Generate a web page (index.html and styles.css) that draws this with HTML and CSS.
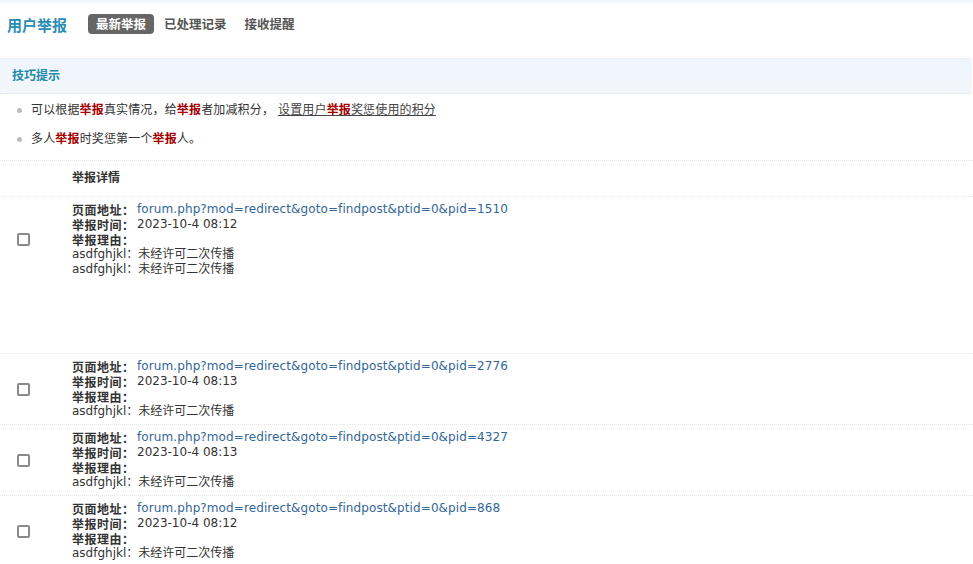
FILE: index.html
```html
<!DOCTYPE html>
<html>
<head>
  <meta charset="utf-8">
  <title>用户举报</title>
  <link rel="stylesheet" href="styles.css">
</head>
<body>
  <div class="topbar"></div>
  <div class="nav">
    <h3 class="nav-title">用户举报</h3>
    <ul class="tabs">
      <li class="tab current">最新举报</li>
      <li class="tab">已处理记录</li>
      <li class="tab">接收提醒</li>
    </ul>
  </div>

  <div class="tips">
    <div class="tips-head">技巧提示</div>
    <ul class="tips-list">
      <li>可以根据<b>举报</b>真实情况，给<b>举报</b>者加减积分， <a href="#">设置用户<b>举报</b>奖惩使用的积分</a></li>
      <li>多人<b>举报</b>时奖惩第一个<b>举报</b>人。</li>
    </ul>
  </div>

  <div class="reports">
    <div class="report-head">举报详情</div>

    <div class="report first">
      <div class="check"><span class="box"></span></div>
      <div class="detail">
        <div><span class="label">页面地址：</span><a href="#">forum.php?mod=redirect&amp;goto=findpost&amp;ptid=0&amp;pid=1510</a></div>
        <div><span class="label">举报时间：</span>2023-10-4 08:12</div>
        <div><span class="label">举报理由：</span></div>
        <div>asdfghjkl：未经许可二次传播</div>
        <div>asdfghjkl：未经许可二次传播</div>
      </div>
    </div>

    <div class="report">
      <div class="check"><span class="box"></span></div>
      <div class="detail">
        <div><span class="label">页面地址：</span><a href="#">forum.php?mod=redirect&amp;goto=findpost&amp;ptid=0&amp;pid=2776</a></div>
        <div><span class="label">举报时间：</span>2023-10-4 08:13</div>
        <div><span class="label">举报理由：</span></div>
        <div>asdfghjkl：未经许可二次传播</div>
      </div>
    </div>

    <div class="report">
      <div class="check"><span class="box"></span></div>
      <div class="detail">
        <div><span class="label">页面地址：</span><a href="#">forum.php?mod=redirect&amp;goto=findpost&amp;ptid=0&amp;pid=4327</a></div>
        <div><span class="label">举报时间：</span>2023-10-4 08:13</div>
        <div><span class="label">举报理由：</span></div>
        <div>asdfghjkl：未经许可二次传播</div>
      </div>
    </div>

    <div class="report">
      <div class="check"><span class="box"></span></div>
      <div class="detail">
        <div><span class="label">页面地址：</span><a href="#">forum.php?mod=redirect&amp;goto=findpost&amp;ptid=0&amp;pid=868</a></div>
        <div><span class="label">举报时间：</span>2023-10-4 08:12</div>
        <div><span class="label">举报理由：</span></div>
        <div>asdfghjkl：未经许可二次传播</div>
      </div>
    </div>
  </div>
</body>
</html>
```

FILE: styles.css
```css
body {
  margin: 0;
  font: 12px/15px "DejaVu Sans", "Noto Sans CJK SC", sans-serif;
  color: #333;
  background: #fff;
}
a {
  color: #336699;
  text-decoration: none;
}
.topbar {
  height: 6px;
  background: linear-gradient(#eef5fa, #fff);
}
.nav {
  display: flex;
  align-items: center;
  height: 36px;
  padding: 0 0 0 7px;
}
.nav-title {
  margin: 0 21px 0 0;
  font-size: 15px;
  font-weight: bold;
  color: #2a8db5;
  font-family: "Noto Sans CJK SC", sans-serif;
}
.tabs {
  display: flex;
  margin: 0;
  padding: 0;
  list-style: none;
}
.tab {
  margin-right: 2px;
  padding: 0 8px;
  height: 20px;
  line-height: 20px;
  border-radius: 4px;
  font-size: 12.5px;
  font-weight: bold;
  color: #555;
  font-family: "Noto Sans CJK SC", sans-serif;
}
.tab.current {
  background: #666;
  color: #fff;
}
.tips {
  margin-top: 16px;
}
.tips-head {
  height: 34px;
  line-height: 34px;
  padding-left: 12px;
  margin-right: 1px;
  border-top: 1px solid #eef1f4;
  border-bottom: 1px dotted #dde5ec;
  background: linear-gradient(#eef5fd, #f3f7fb);
  font-weight: bold;
  color: #1c8aa9;
}
.tips-list {
  margin: 0;
  padding: 2px 0 6px 31px;
  list-style: none;
  border-bottom: 1px dotted #e6e6e6;
}
.tips-list li {
  position: relative;
  height: 29px;
  line-height: 29px;
  letter-spacing: 0.15px;
}
.tips-list li::before {
  content: "";
  position: absolute;
  left: -14px;
  top: 12px;
  width: 5px;
  height: 5px;
  border-radius: 50%;
  background: #bbb;
}
.tips-list b {
  color: #a30000;
}
.tips-list a {
  color: #444;
  text-decoration: underline;
}
.report-head {
  height: 35px;
  line-height: 35px;
  padding-left: 72px;
  font-weight: bold;
  border-bottom: 1px dotted #e6e6e6;
}
.report {
  display: flex;
  align-items: flex-start;
  padding: 5px 0 5px;
  border-bottom: 1px dotted #e6e6e6;
}
.report.first {
  padding-bottom: 76px;
}
.check {
  display: flex;
  align-items: center;
  width: 72px;
  align-self: stretch;
  padding-left: 17px;
  box-sizing: border-box;
}
.report.first .check {
  align-self: flex-start;
  height: 75px;
}
.box {
  display: block;
  width: 9px;
  height: 9px;
  border: 2px solid #8a8a8a;
  border-radius: 2px;
  background: #fff;
}
.detail {
  flex: 1;
}
.detail > div {
  display: flex;
  align-items: center;
  height: 15px;
  line-height: 15px;
  white-space: nowrap;
  overflow: visible;
}
.detail a {
  letter-spacing: 0.1px;
}
.label {
  flex: none;
  width: 65px;
  height: 15px;
  line-height: 15px;
  font-size: 12px;
  letter-spacing: 0.5px;
  font-weight: bold;
  font-family: "Noto Sans CJK SC", sans-serif;
}
```
